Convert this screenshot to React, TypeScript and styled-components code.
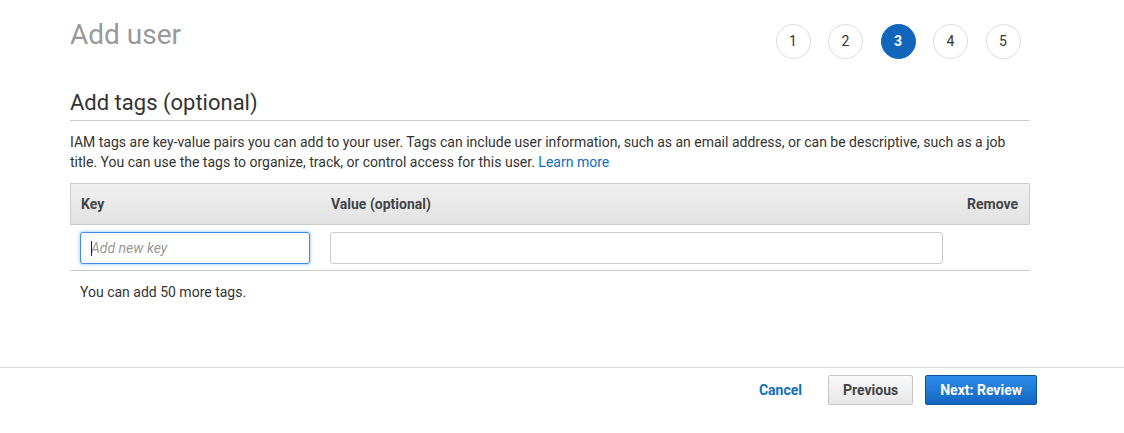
import React from "react";
import styled, { createGlobalStyle } from "styled-components";

const Global = createGlobalStyle`
  html, body { margin: 0; padding: 0; background: #fff; }
  body { font-family: Roboto, "Liberation Sans", Arial, sans-serif; color: #333; }
  * { box-sizing: border-box; }
`;

const Page = styled.div`
  width: 1124px;
  height: 433px;
  display: flex;
  flex-direction: column;
`;

const Main = styled.main`
  height: 367px;
  padding: 13px 94px 0 70px;
  display: flex;
  flex-direction: column;
`;

const TopBar = styled.div`
  display: flex;
  justify-content: space-between;
  align-items: flex-start;
`;

const Title = styled.h1`
  margin: 2px 0 0;
  font-size: 28px;
  line-height: 40px;
  font-weight: 400;
  color: #999;
`;

const Steps = styled.ol`
  display: flex;
  gap: 17.5px;
  list-style: none;
  margin: 10.5px 9.5px 0 0;
  padding: 0;
`;

const Step = styled.li<{ $active?: boolean }>`
  width: 35px;
  height: 35px;
  border-radius: 50%;
  display: flex;
  align-items: center;
  justify-content: center;
  font-size: 14px;
  font-weight: ${(p) => (p.$active ? 700 : 400)};
  color: ${(p) => (p.$active ? "#fff" : "#333")};
  background: ${(p) => (p.$active ? "#1166bb" : "#fff")};
  border: 1px solid ${(p) => (p.$active ? "#1166bb" : "#ddd")};
`;

const SectionTitle = styled.h2`
  margin: 29px 0 0;
  font-size: 22px;
  line-height: 30px;
  font-weight: 400;
  color: #333;
  padding-bottom: 2px;
  border-bottom: 1px solid #ccc;
`;

const Description = styled.p`
  margin: 11px 0 0;
  font-size: 14px;
  line-height: 20px;
  color: #333;
`;

const Link = styled.a`
  color: #0f6ebd;
  text-decoration: none;
`;

const Table = styled.div`
  margin-top: 11px;
  display: flex;
  flex-direction: column;
`;

const HeaderRow = styled.div`
  display: grid;
  grid-template-columns: 250px 1fr 77px;
  height: 42px;
  align-items: center;
  background: linear-gradient(#f0f0f0, #e2e2e2);
  border: 1px solid #ccc;
`;

const HeadCell = styled.div<{ $right?: boolean }>`
  padding: 0 10px;
  font-size: 14px;
  font-weight: 700;
  color: #444;
  text-align: ${(p) => (p.$right ? "right" : "left")};
  padding-right: ${(p) => (p.$right ? "11px" : "10px")};
`;

const BodyRow = styled.div`
  display: grid;
  grid-template-columns: 250px 1fr 77px;
  align-items: center;
  padding: 7px 0 6px;
  border-bottom: 1px solid #ccc;
`;

const Cell = styled.div`
  padding: 0 10px;
  position: relative;
`;

const Input = styled.input<{ $focused?: boolean }>`
  width: 100%;
  height: 32px;
  border-radius: 3px;
  border: 1px solid ${(p) => (p.$focused ? "#3b8ee0" : "#ccc")};
  box-shadow: ${(p) => (p.$focused ? "0 0 3px 1px rgba(42,138,226,0.35)" : "none")};
  padding: 0 10px;
  font-family: inherit;
  font-size: 14px;
  color: #333;
  outline: none;
  &::placeholder {
    font-style: italic;
    color: #999;
  }
`;

const Caret = styled.span`
  position: absolute;
  left: 21px;
  top: 9px;
  width: 1px;
  height: 15px;
  background: #222;
`;

const Note = styled.p`
  margin: 11px 0 0 10px;
  font-size: 14px;
  line-height: 20px;
  color: #333;
`;

const Footer = styled.footer`
  border-top: 1px solid #ddd;
  display: flex;
  justify-content: flex-end;
  align-items: center;
  padding: 7px 87px 0 0;
  gap: 12px;
`;

const TextButton = styled.button`
  background: none;
  border: none;
  font-family: inherit;
  font-size: 14px;
  font-weight: 700;
  color: #0f6ebd;
  padding: 0 14px 0 0;
  height: 30px;
  cursor: pointer;
`;

const Button = styled.button<{ $primary?: boolean }>`
  height: 30px;
  padding: 0 14px;
  border-radius: 2px;
  font-family: inherit;
  font-size: 14px;
  font-weight: 700;
  cursor: pointer;
  color: ${(p) => (p.$primary ? "#fff" : "#444")};
  border: 1px solid ${(p) => (p.$primary ? "#0b559e" : "#c6c6c6")};
  background: ${(p) =>
    p.$primary
      ? "linear-gradient(#2d8ceb, #1466c0)"
      : "linear-gradient(#f9f9f9, #e6e6e6)"};
`;

export default function App() {
  return (
    <>
      <Global />
      <Page>
        <Main>
          <TopBar>
            <Title>Add user</Title>
            <Steps>
              {[1, 2, 3, 4, 5].map((n) => (
                <Step key={n} $active={n === 3}>
                  {n}
                </Step>
              ))}
            </Steps>
          </TopBar>
          <SectionTitle>Add tags (optional)</SectionTitle>
          <Description>
            IAM tags are key-value pairs you can add to your user. Tags can include user information, such as an
            email address, or can be descriptive, such as a job title. You can use the tags to organize, track, or
            control access for this user. <Link href="#">Learn more</Link>
          </Description>
          <Table>
            <HeaderRow>
              <HeadCell>Key</HeadCell>
              <HeadCell>Value (optional)</HeadCell>
              <HeadCell $right>Remove</HeadCell>
            </HeaderRow>
            <BodyRow>
              <Cell>
                <Input $focused placeholder="Add new key" />
                <Caret />
              </Cell>
              <Cell>
                <Input />
              </Cell>
              <Cell />
            </BodyRow>
          </Table>
          <Note>You can add 50 more tags.</Note>
        </Main>
        <Footer>
          <TextButton>Cancel</TextButton>
          <Button>Previous</Button>
          <Button $primary>Next: Review</Button>
        </Footer>
      </Page>
    </>
  );
}
